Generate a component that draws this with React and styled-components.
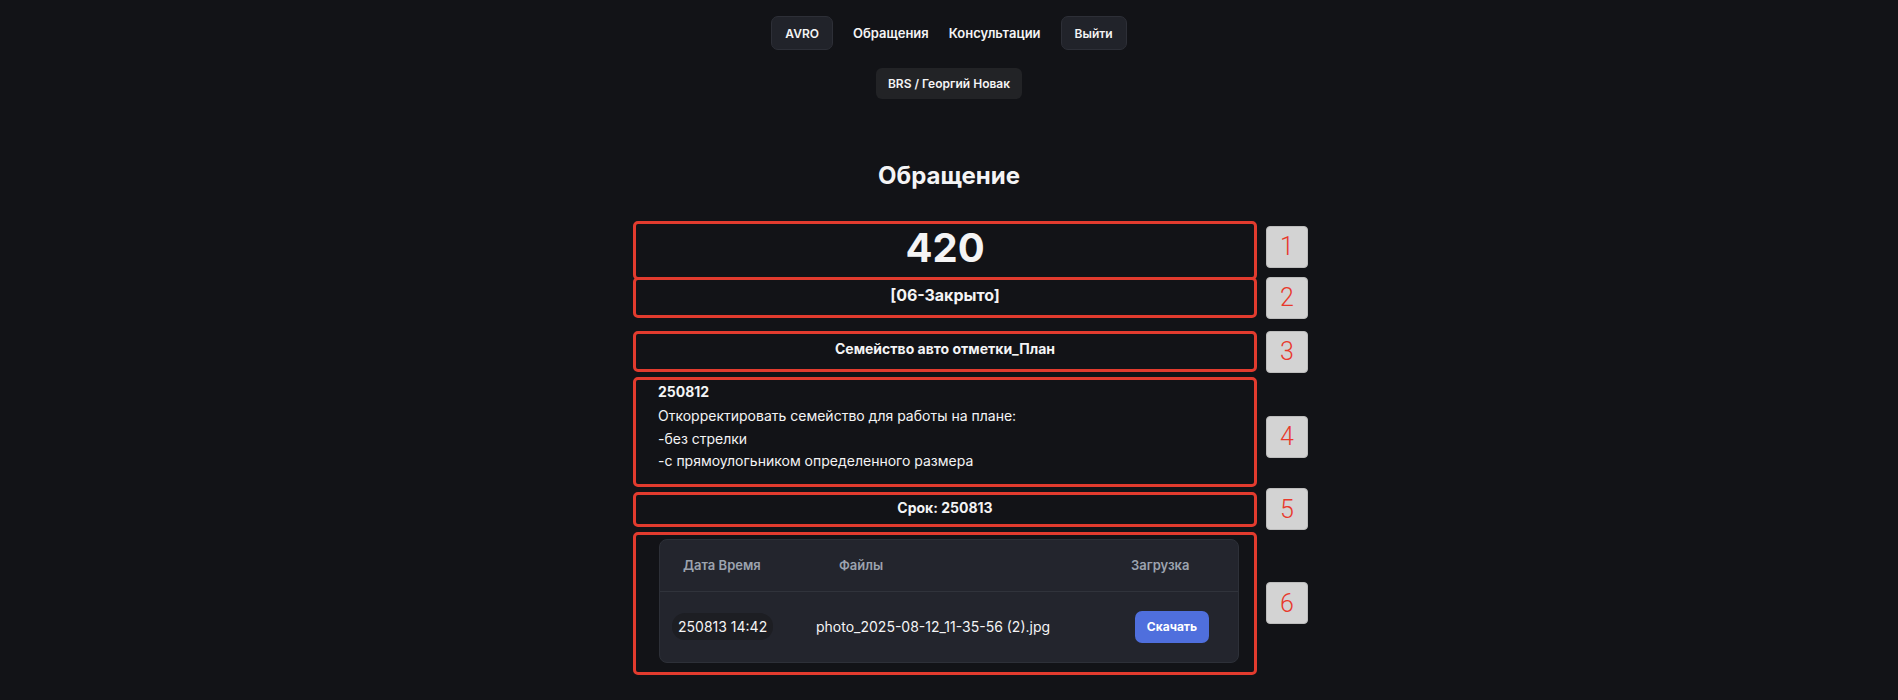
import React from 'react';
import styled, { createGlobalStyle } from 'styled-components';

const GlobalStyle = createGlobalStyle`
  html, body {
    margin: 0;
    background: #121317;
    color: #f4f4f5;
    font-family: Inter, "Noto Sans", sans-serif;
  }
  * { box-sizing: border-box; }
`;

const Page = styled.div`
  display: flex;
  flex-direction: column;
  align-items: center;
  padding-top: 16px;
  min-height: 700px;
`;

const Nav = styled.nav`
  display: flex;
  align-items: center;
  gap: 20px;
`;

const NavButton = styled.button`
  height: 34px;
  padding: 0 13px;
  background: #21232a;
  border: 1px solid #2d2f37;
  border-radius: 7px;
  color: #f4f4f5;
  font-family: inherit;
  font-size: 12px;
  font-weight: 600;
`;

const NavLink = styled.a`
  color: #f4f4f5;
  font-size: 13px;
  font-weight: 600;
  text-decoration: none;
`;

const UserChip = styled.div`
  margin-top: 18px;
  height: 31px;
  padding: 0 12px;
  display: flex;
  align-items: center;
  background: #222326;
  border-radius: 6px;
  font-size: 12px;
  font-weight: 600;
`;

const Title = styled.h2`
  margin: 62px 0 31px;
  font-size: 24px;
  line-height: 29px;
  font-weight: 700;
`;

const Column = styled.div`
  width: 632px;
`;

const Row = styled.div`
  position: relative;
  width: 624px;
  margin-top: ${(p) => p.$gap || 0}px;
`;

const Box = styled.div`
  border: 3px solid #e23b2e;
  border-radius: 5px;
  text-align: center;
  font-weight: 700;
`;

const Number = styled(Box)`
  padding: 0 0 5px;
  font-size: 40px;
  line-height: 48px;
`;

const Status = styled(Box)`
  padding: 3px 0 8px;
  font-size: 16px;
  line-height: 24px;
`;

const Line = styled(Box)`
  padding: ${(p) => p.$pad};
  font-size: 14px;
  line-height: 21px;
`;

const Description = styled(Box)`
  padding: 1px 22px 11px;
  text-align: left;
  font-weight: 400;
  font-size: 14px;
  line-height: 22.4px;
`;

const DescHead = styled.div`
  font-weight: 700;
  margin-bottom: 2px;
`;

const FilesBox = styled(Box)`
  padding: 4px 15px 9px 23px;
  text-align: left;
  font-weight: 400;
`;

const Card = styled.div`
  background: #23252d;
  border: 1px solid #2d3038;
  border-radius: 8px;
  display: grid;
  grid-template-columns: 140px 307px 1fr;
`;

const HeadCell = styled.div`
  height: 52px;
  display: flex;
  align-items: center;
  padding-left: ${(p) => p.$pad}px;
  border-bottom: 1px solid #30333b;
  color: #9ca3af;
  font-size: 13px;
  font-weight: 600;
`;

const Cell = styled.div`
  height: 70px;
  display: flex;
  align-items: center;
  padding-left: ${(p) => p.$pad}px;
  font-size: 14px;
  color: #f4f4f5;
`;

const Stamp = styled.span`
  padding: 0 6px;
  height: 27px;
  line-height: 27px;
  border-radius: 13px;
  background: #1d1e23;
`;

const Download = styled.button`
  width: 74px;
  height: 32px;
  border: none;
  border-radius: 7px;
  background: #4f6fdd;
  color: #fff;
  font-family: inherit;
  font-size: 12px;
  font-weight: 700;
`;

const Marker = styled.div`
  position: absolute;
  left: 633px;
  top: 50%;
  transform: translateY(calc(-50% + ${(p) => p.$shift || 0}px));
  width: 42px;
  height: 42px;
  display: flex;
  align-items: center;
  justify-content: center;
  background: #d3d3d3;
  border: 1px solid #bcbcbc;
  border-radius: 4px;
  color: #e8392c;
  font-family: Roboto, "Liberation Sans", sans-serif;
  font-weight: 300;
  font-size: 25px;
`;

export default function App() {
  return (
    <>
      <GlobalStyle />
      <Page>
        <Nav>
          <NavButton>AVRO</NavButton>
          <NavLink href="#">Обращения</NavLink>
          <NavLink href="#">Консультации</NavLink>
          <NavButton>Выйти</NavButton>
        </Nav>
        <UserChip>BRS / Георгий Новак</UserChip>
        <Title>Обращение</Title>
        <Column>
          <Row>
            <Number>420</Number>
            <Marker $shift={-4}>1</Marker>
          </Row>
          <Row $gap={-3}>
            <Status>[06-Закрыто]</Status>
            <Marker>2</Marker>
          </Row>
          <Row $gap={13}>
            <Line $pad="4px 8px 10px">Семейство авто отметки_План</Line>
            <Marker>3</Marker>
          </Row>
          <Row $gap={5}>
            <Description>
              <DescHead>250812</DescHead>
              Откорректировать семейство для работы на плане:
              <br />
              -без стрелки
              <br />
              -с прямоулогьником определенного размера
            </Description>
            <Marker $shift={5}>4</Marker>
          </Row>
          <Row $gap={5}>
            <Line $pad="2px 8px 6px">Срок: 250813</Line>
            <Marker>5</Marker>
          </Row>
          <Row $gap={5}>
            <FilesBox>
              <Card>
                <HeadCell $pad={23}>Дата Время</HeadCell>
                <HeadCell $pad={39}>Файлы</HeadCell>
                <HeadCell $pad={24}>Загрузка</HeadCell>
                <Cell $pad={12}>
                  <Stamp>250813 14:42</Stamp>
                </Cell>
                <Cell $pad={16}>photo_2025-08-12_11-35-56 (2).jpg</Cell>
                <Cell $pad={28}>
                  <Download>Скачать</Download>
                </Cell>
              </Card>
            </FilesBox>
            <Marker>6</Marker>
          </Row>
        </Column>
      </Page>
    </>
  );
}
